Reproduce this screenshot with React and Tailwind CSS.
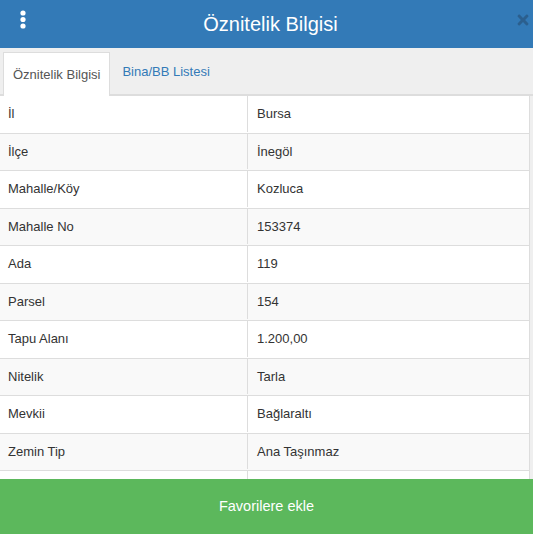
import { FaTimes } from "react-icons/fa";

const rows = [
    ["İl", "Bursa"],
    ["İlçe", "İnegöl"],
    ["Mahalle/Köy", "Kozluca"],
    ["Mahalle No", "153374"],
    ["Ada", "119"],
    ["Parsel", "154"],
    ["Tapu Alanı", "1.200,00"],
    ["Nitelik", "Tarla"],
    ["Mevkii", "Bağlaraltı"],
    ["Zemin Tip", "Ana Taşınmaz"],
    ["", ""],
];

const App = () => {
    return (
        <div
            className="w-[533px] h-[534px] flex flex-col overflow-hidden bg-[#efefef] text-[#333]"
            style={{ fontFamily: '"Liberation Sans", Arial, sans-serif' }}
        >
            {/* header */}
            <div className="relative h-[48px] shrink-0 bg-[#337ab7] flex items-center justify-center pl-[8px]">
                <svg
                    className="absolute left-[20px] top-[10px]"
                    width="6"
                    height="20"
                    viewBox="0 0 6 20"
                >
                    <circle cx="3" cy="3" r="2.6" fill="#fff" />
                    <circle cx="3" cy="9.5" r="2.6" fill="#fff" />
                    <circle cx="3" cy="16" r="2.6" fill="#fff" />
                </svg>
                <h1 className="text-white text-[20px] leading-none">Öznitelik Bilgisi</h1>
                <FaTimes className="absolute left-[515px] top-[12px] text-[#2b5f8e]" size={16} />
            </div>

            {/* tabs */}
            <div className="h-[48px] shrink-0 flex items-end pl-[3px] border-b-2 border-[#ddd]">
                <div className="h-[44px] -mb-[2px] px-[9px] flex items-center bg-white border border-b-0 border-[#ddd] text-[13px] text-[#555]">
                    Öznitelik Bilgisi
                </div>
                <div className="h-[44px] px-[12px] flex items-center text-[13px] text-[#337ab7]">
                    Bina/BB Listesi
                </div>
            </div>

            {/* table */}
            <div className="flex-1 overflow-hidden">
                <div className="w-[530px] border-r border-[#ddd]">
                    {rows.map((row, i) => (
                        <div
                            key={i}
                            className={`h-[37.5px] flex border-b border-[#ddd] text-[13px] pb-[1px] ${
                                i % 2 === 0 ? "bg-white" : "bg-[#f9f9f9]"
                            }`}
                        >
                            <div className="w-[248px] shrink-0 pl-[8px] flex items-center border-r border-[#ddd]">
                                {row[0]}
                            </div>
                            <div className="flex-1 pl-[9px] flex items-center">{row[1]}</div>
                        </div>
                    ))}
                </div>
            </div>

            {/* button */}
            <button className="h-[55px] shrink-0 bg-[#5cb85c] text-white text-[14.5px] flex items-center justify-center">
                Favorilere ekle
            </button>
        </div>
    );
};

export default App;
